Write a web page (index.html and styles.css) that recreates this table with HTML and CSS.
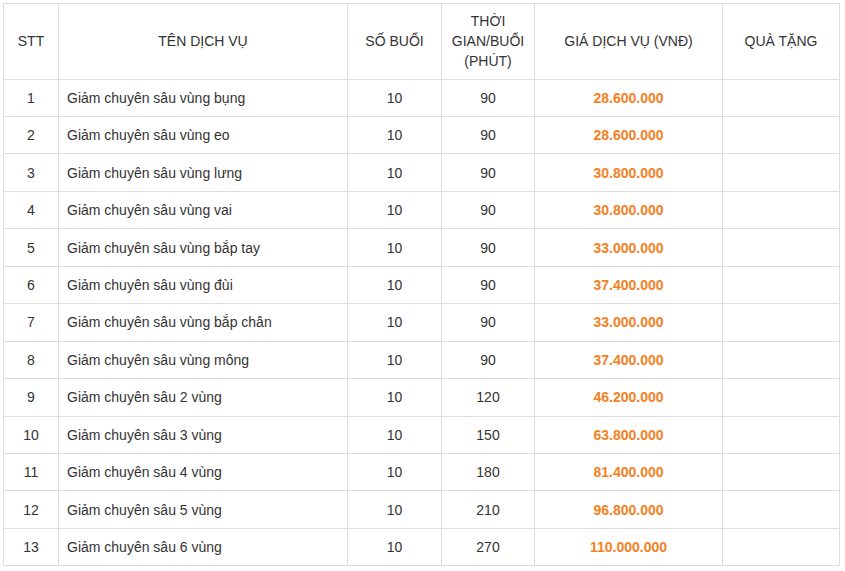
FILE: index.html
```html
<!DOCTYPE html>
<html lang="vi">
<head>
<meta charset="utf-8">
<link rel="stylesheet" href="styles.css">
</head>
<body>
<table class="price-table">
  <colgroup>
    <col class="c-stt"><col class="c-name"><col class="c-num"><col class="c-time"><col class="c-price"><col class="c-gift">
  </colgroup>
  <thead>
    <tr>
      <th>STT</th>
      <th>TÊN DỊCH VỤ</th>
      <th>SỐ BUỔI</th>
      <th>THỜI GIAN/BUỔI (PHÚT)</th>
      <th>GIÁ DỊCH VỤ (VNĐ)</th>
      <th>QUÀ TẶNG</th>
    </tr>
  </thead>
  <tbody>
    <tr><td>1</td><td class="name">Giảm chuyên sâu vùng bụng</td><td>10</td><td>90</td><td class="price">28.600.000</td><td></td></tr>
    <tr><td>2</td><td class="name">Giảm chuyên sâu vùng eo</td><td>10</td><td>90</td><td class="price">28.600.000</td><td></td></tr>
    <tr><td>3</td><td class="name">Giảm chuyên sâu vùng lưng</td><td>10</td><td>90</td><td class="price">30.800.000</td><td></td></tr>
    <tr><td>4</td><td class="name">Giảm chuyên sâu vùng vai</td><td>10</td><td>90</td><td class="price">30.800.000</td><td></td></tr>
    <tr><td>5</td><td class="name">Giảm chuyên sâu vùng bắp tay</td><td>10</td><td>90</td><td class="price">33.000.000</td><td></td></tr>
    <tr><td>6</td><td class="name">Giảm chuyên sâu vùng đùi</td><td>10</td><td>90</td><td class="price">37.400.000</td><td></td></tr>
    <tr><td>7</td><td class="name">Giảm chuyên sâu vùng bắp chân</td><td>10</td><td>90</td><td class="price">33.000.000</td><td></td></tr>
    <tr><td>8</td><td class="name">Giảm chuyên sâu vùng mông</td><td>10</td><td>90</td><td class="price">37.400.000</td><td></td></tr>
    <tr><td>9</td><td class="name">Giảm chuyên sâu 2 vùng</td><td>10</td><td>120</td><td class="price">46.200.000</td><td></td></tr>
    <tr><td>10</td><td class="name">Giảm chuyên sâu 3 vùng</td><td>10</td><td>150</td><td class="price">63.800.000</td><td></td></tr>
    <tr><td>11</td><td class="name">Giảm chuyên sâu 4 vùng</td><td>10</td><td>180</td><td class="price">81.400.000</td><td></td></tr>
    <tr><td>12</td><td class="name">Giảm chuyên sâu 5 vùng</td><td>10</td><td>210</td><td class="price">96.800.000</td><td></td></tr>
    <tr><td>13</td><td class="name">Giảm chuyên sâu 6 vùng</td><td>10</td><td>270</td><td class="price">110.000.000</td><td></td></tr>
  </tbody>
</table>
</body>
</html>
```

FILE: styles.css
```css
html, body {
  margin: 0;
  padding: 0;
  background: #fff;
}
body {
  padding: 3px;
  font-family: "Liberation Sans", Arial, sans-serif;
  font-size: 14px;
  color: #333;
}
.price-table {
  border-collapse: collapse;
  table-layout: fixed;
  width: 836px;
}
.c-stt { width: 55px; }
.c-name { width: 289px; }
.c-num { width: 94px; }
.c-time { width: 93px; }
.c-price { width: 188px; }
.c-gift { width: 117px; }
.price-table th,
.price-table td {
  border: 1px solid #ddd;
  text-align: center;
  vertical-align: middle;
  line-height: 20px;
  padding: 0 8px;
}
.price-table th {
  font-weight: normal;
  height: 75.6px;
  padding: 7px 6px;
  box-sizing: border-box;
}
.price-table tbody tr {
  height: 37.45px;
}
.price-table td.name {
  text-align: left;
}
.price-table td.price {
  color: #f5801f;
  font-weight: bold;
}
```
